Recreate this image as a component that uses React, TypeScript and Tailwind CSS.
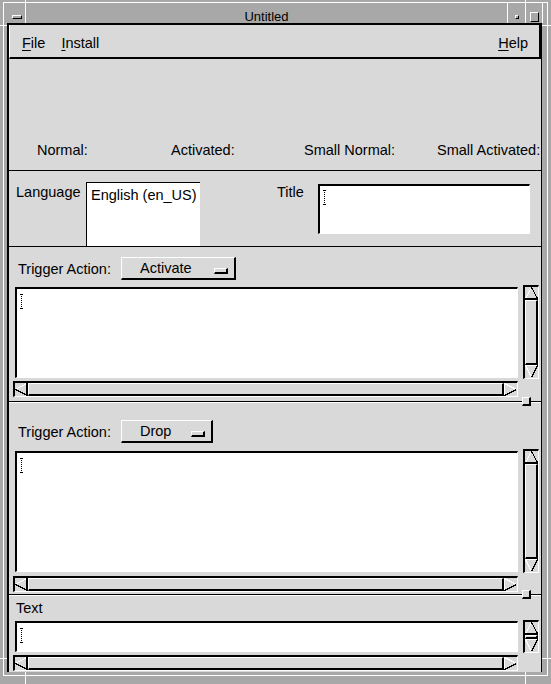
import React from "react";

const FONT = "font-['Liberation_Sans',Arial,Helvetica,sans-serif]";
// motif style bevels
const OUT =
  "border-t border-l border-t-white border-l-white border-b-2 border-r-2 border-b-black border-r-black";
const IN =
  "border-t-2 border-l-2 border-t-black border-l-black border-b border-r border-b-white border-r-white";

function ArrowUp() {
  return (
    <svg width="13" height="13" className="block shrink-0" shapeRendering="crispEdges">
      <path d="M0.5 11.5 L6.5 0.5" stroke="#fff" fill="none" />
      <path d="M6.5 0.5 L12.5 11.5" stroke="#000" fill="none" />
      <path d="M0 12 H13" stroke="#000" strokeWidth="2" />
    </svg>
  );
}

function ArrowDown() {
  return (
    <svg width="13" height="13" className="block shrink-0" shapeRendering="crispEdges">
      <path d="M0 0.5 H13" stroke="#fff" />
      <path d="M0.5 0.5 L6.5 12.5" stroke="#fff" fill="none" />
      <path d="M12.5 0.5 L6.5 12.5" stroke="#000" strokeWidth="1.5" fill="none" />
    </svg>
  );
}

function ArrowLeft() {
  return (
    <svg width="13" height="13" className="block shrink-0" shapeRendering="crispEdges">
      <path d="M11.5 0.5 L0.5 6.5" stroke="#fff" fill="none" />
      <path d="M0.5 6.5 L11.5 12" stroke="#000" strokeWidth="1.5" fill="none" />
      <path d="M12 0 V13" stroke="#000" strokeWidth="2" />
    </svg>
  );
}

function ArrowRight() {
  return (
    <svg width="13" height="13" className="block shrink-0" shapeRendering="crispEdges">
      <path d="M0.5 0 V13" stroke="#fff" />
      <path d="M0.5 0.5 L12.5 6.5" stroke="#fff" fill="none" />
      <path d="M12.5 6.5 L0.5 12.5" stroke="#000" strokeWidth="1.5" fill="none" />
    </svg>
  );
}

function IBeam() {
  return (
    <svg width="3" height="15" className="block" shapeRendering="crispEdges">
      <rect x="0" y="0" width="3" height="1" />
      {[2, 4, 6, 8, 10, 12].map((y) => (
        <rect key={y} x="1" y={y} width="1" height="1" />
      ))}
      <rect x="0" y="14" width="3" height="1" />
    </svg>
  );
}

function HScroll({ className = "" }: { className?: string }) {
  return (
    <div className={`flex h-[16px] bg-[#d9d9d9] ${IN} ${className}`}>
      <ArrowLeft />
      <div className={`flex-1 ${OUT}`} />
      <ArrowRight />
    </div>
  );
}

function VScroll({ className = "" }: { className?: string }) {
  return (
    <div className={`flex w-[16px] shrink-0 flex-col bg-[#d9d9d9] ${IN} ${className}`}>
      <ArrowUp />
      <div className={`flex-1 ${OUT}`} />
      <ArrowDown />
    </div>
  );
}

function OptionButton({ label, width }: { label: string; width: string }) {
  return (
    <div className={`flex h-[23px] items-center pl-[18px] pr-[6px] ${width} ${OUT}`}>
      <span className="leading-[16px]">{label}</span>
      <div className={`ml-auto mt-[6px] h-[6px] w-[14px] ${OUT}`} />
    </div>
  );
}

function Sep() {
  return (
    <div className="relative h-[2px] shrink-0 border-t border-b border-t-black border-b-white">
      <div className={`absolute -top-[5px] right-[10px] h-[9px] w-[9px] bg-[#d9d9d9] ${OUT}`} />
    </div>
  );
}

function Mnemonic({ first, rest }: { first: string; rest: string }) {
  return (
    <span>
      <span className="underline decoration-1 underline-offset-2">{first}</span>
      {rest}
    </span>
  );
}

export default function App() {
  return (
    <div
      className={`relative h-[684px] w-[551px] overflow-hidden bg-[#a8a8a8] px-[3px] pt-[2px] pb-[8px] text-[14.5px] text-black ${FONT}`}
    >
      <div className="flex h-full flex-col border border-white pl-[3px] pr-[5px] pb-[3px]">
        {/* window title bar */}
        <div className="ml-[1px] -mr-[1px] flex h-[20px] shrink-0 border-r border-r-white">
          <div className="flex w-[18px] justify-center border-r border-r-white pt-[12px]">
            <div className="h-[4px] w-[10px] border-t border-l border-t-white border-l-white border-b border-r border-b-black border-r-black" />
          </div>
          <div className="flex-1 pt-[7px] text-center text-[13px] leading-[13px]">Untitled</div>
          <div className="flex w-[18px] justify-center border-l border-l-white pt-[12px]">
            <div className="h-[4px] w-[4px] border-t border-l border-t-white border-l-white border-b border-r border-b-black border-r-black" />
          </div>
          <div className="flex w-[17px] justify-center border-l border-l-white pt-[9px]">
            <div className="h-[10px] w-[9px] border-t border-l border-t-white border-l-white border-b border-r border-b-black border-r-black" />
          </div>
        </div>

        {/* client area */}
        <div className="flex flex-1 flex-col border-t-2 border-l-2 border-r border-black bg-[#d9d9d9]">
          {/* menu bar */}
          <div className="flex h-[34px] shrink-0 justify-between border-l border-l-white border-b-2 border-r-2 border-b-black border-r-black pl-[12px] pr-[11px] pt-[10px] leading-[16px]">
            <div className="flex gap-[16px]">
              <Mnemonic first="F" rest="ile" />
              <Mnemonic first="I" rest="nstall" />
            </div>
            <Mnemonic first="H" rest="elp" />
          </div>

          {/* icon labels */}
          <div className="flex h-[112px] shrink-0 items-end whitespace-nowrap border-b border-b-black pb-[12px] pl-[28px] leading-[16px]">
            <span className="w-[134px] shrink-0">Normal:</span>
            <span className="w-[133px] shrink-0">Activated:</span>
            <span className="w-[133px] shrink-0">Small Normal:</span>
            <span>Small Activated:</span>
          </div>

          {/* language / title */}
          <div className="flex h-[75px] shrink-0 items-start pl-[7px] leading-[16px]">
            <span className="w-[70px] pt-[13px]">Language</span>
            <div className="mt-[11px] h-[64px] w-[114px] border-t border-l border-black bg-white pl-[4px] pt-[4px] whitespace-nowrap">
              English (en_US)
            </div>
            <span className="ml-[77px] w-[41px] pt-[13px]">Title</span>
            <div className={`mt-[13px] h-[50px] w-[212px] bg-white pl-[3px] pt-[4px] ${IN}`}>
              <IBeam />
            </div>
          </div>

          {/* paned window */}
          <div className="flex flex-1 flex-col border-t border-t-black">
            <div className="flex h-[154px] shrink-0 flex-col">
              <div className="mt-[10px] flex items-center pl-[9px] leading-[16px]">
                <span className="w-[103px]">Trigger Action:</span>
                <OptionButton label="Activate" width="w-[115px]" />
              </div>
              <div className="mt-[5px] flex items-start pl-[6px]">
                <div className={`mt-[2px] h-[91px] w-[503px] bg-white pl-[3px] pt-[5px] ${IN}`}>
                  <IBeam />
                </div>
                <VScroll className="ml-[5px] h-[94px]" />
              </div>
              <HScroll className="mt-[2px] ml-[4px] w-[505px]" />
            </div>
            <Sep />

            <div className="flex h-[191px] shrink-0 flex-col">
              <div className="mt-[17px] flex items-center pl-[9px] leading-[16px]">
                <span className="w-[103px]">Trigger Action:</span>
                <OptionButton label="Drop" width="w-[92px]" />
              </div>
              <div className="mt-[6px] flex items-start pl-[6px]">
                <div className={`mt-[2px] h-[121px] w-[503px] bg-white pl-[3px] pt-[5px] ${IN}`}>
                  <IBeam />
                </div>
                <VScroll className="ml-[5px] h-[124px]" />
              </div>
              <HScroll className="mt-[3px] ml-[4px] w-[505px]" />
            </div>
            <Sep />

            <div className="flex flex-1 flex-col">
              <span className="pl-[7px] pt-[4px] leading-[16px]">Text</span>
              <div className="mt-[4px] flex items-start pl-[6px]">
                <div className={`mt-[1px] h-[31px] w-[503px] bg-white pl-[3px] pt-[5px] ${IN}`}>
                  <IBeam />
                </div>
                <VScroll className="ml-[5px] h-[33px]" />
              </div>
              <HScroll className="mt-[2px] ml-[4px] w-[505px]" />
            </div>
          </div>
        </div>
      </div>

      {/* resize handle marks on the frame */}
      <div className="absolute left-[25px] top-0 h-[3px] w-px bg-white" />
      <div className="absolute left-[525px] top-0 h-[3px] w-px bg-white" />
      <div className="absolute left-0 top-[25px] h-px w-[7px] bg-white" />
      <div className="absolute left-[542px] top-[25px] h-px w-[9px] bg-white" />
      <div className="absolute left-0 top-[658px] h-px w-[7px] bg-white" />
      <div className="absolute left-[542px] top-[658px] h-px w-[9px] bg-white" />
      <div className="absolute left-[25px] top-[672px] h-[12px] w-px bg-white" />
      <div className="absolute left-[525px] top-[672px] h-[12px] w-px bg-white" />
    </div>
  );
}
